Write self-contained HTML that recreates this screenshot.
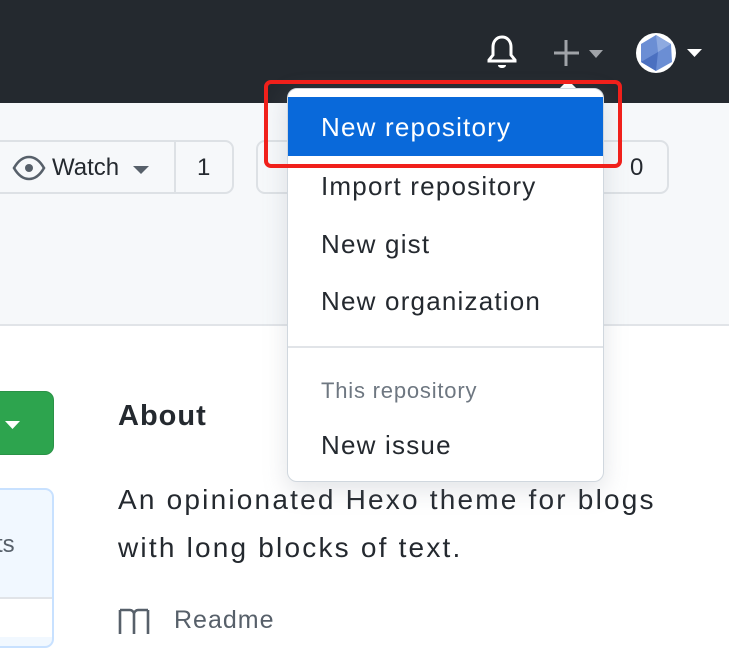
<!DOCTYPE html>
<html><head><meta charset="utf-8"><style>
*{margin:0;padding:0;box-sizing:border-box}
body{width:729px;height:632px;overflow:hidden;position:relative;background:#fff;font-family:"Liberation Sans",sans-serif;color:#24292f}
.hdr{position:absolute;left:0;top:0;width:729px;height:103px;background:#24292f}
.sub{position:absolute;left:0;top:103px;width:729px;height:223px;background:#f6f8fa;border-bottom:2px solid #e1e4e8}
.btn{position:absolute;top:140px;height:54px;border:2px solid #dde1e5;border-radius:9px;background:#f6f8fa}
.abs{position:absolute}
.menu{position:absolute;left:287px;top:88px;width:317px;height:394px;background:#fff;border:1px solid #d0d7de;border-radius:10px;box-shadow:0 8px 24px rgba(140,149,159,.25)}
.mi{position:absolute;left:33px;font-size:26px;letter-spacing:1.2px;color:#24292f;white-space:nowrap}
</style></head><body>
<div class="hdr"></div>
<svg class="abs" style="left:486px;top:34px" width="32" height="36" viewBox="0 0 32 36"><path d="M16 3c-6 0-9 5-9 10v8l-4 5v1h26v-1l-4-5v-8c0-5-3-10-9-10z" fill="none" stroke="#fff" stroke-width="3"/><path d="M12 31h8c0 2-2 3-4 3s-4-1-4-3z" fill="#fff"/></svg>
<svg class="abs" style="left:552px;top:38px" width="56" height="30"><path d="M14 2v26M2 15h25" stroke="#a0a3a8" stroke-width="3"/><path d="M37 12h14l-7 8z" fill="#a0a3a8"/></svg>
<svg class="abs" style="left:636px;top:32px" width="68" height="44"><circle cx="20" cy="21" r="20" fill="#fff"/><polygon points="20,3 35,12 36,30 20,39 5,30 5,12" fill="#6b8ed4"/><polygon points="20,3 35,12 22,20" fill="#8eaae0"/><polygon points="5,30 22,20 20,39" fill="#4b70c0"/><path d="M51 17h15l-7.5 8z" fill="#fff"/></svg>
<div class="sub"></div>
<div class="btn" style="left:-10px;width:244px"></div>
<div class="abs" style="left:174px;top:142px;width:2px;height:50px;background:#dde1e5"></div>
<svg class="abs" style="left:12px;top:153px" width="34" height="30"><path d="M2 15c4-7 9-11 15-11s11 4 15 11c-4 7-9 11-15 11S6 22 2 15z" fill="none" stroke="#57606a" stroke-width="2.6"/><circle cx="17" cy="15" r="4" fill="#57606a"/></svg>
<div class="abs" style="left:52px;top:154px;font-size:24px">Watch</div>
<svg class="abs" style="left:131px;top:165px" width="20" height="10"><path d="M2 1h16l-8 8z" fill="#57606a"/></svg>
<div class="abs" style="left:197px;top:154px;font-size:24px">1</div>
<div class="btn" style="left:256px;width:413px"></div>
<div class="abs" style="left:630px;top:154px;font-size:24px">0</div>
<div class="abs" style="left:-10px;top:391px;width:64px;height:64px;background:#2da44e;border-radius:9px;border:1px solid #2a9247"></div>
<svg class="abs" style="left:4px;top:420px" width="18" height="12"><path d="M1 1h15l-7.5 8z" fill="#fff"/></svg>
<div class="abs" style="left:-10px;top:488px;width:64px;height:160px;background:#f1f8ff;border:2px solid #c8e1ff;border-radius:9px"></div>
<div class="abs" style="left:-8px;top:597px;width:60px;height:40px;background:#fff;border-top:2px solid #e1e4e8"></div>
<div class="abs" style="left:-4px;top:531px;font-size:24px;color:#57606a">ts</div>
<div class="abs" style="left:118px;top:400px;font-size:29px;font-weight:bold;letter-spacing:1px">About</div>
<div class="abs" style="left:118px;top:476px;font-size:28px;letter-spacing:2.2px;line-height:48px;width:620px;white-space:nowrap">An opinionated Hexo theme for blogs<br>with long blocks of text.</div>
<svg class="abs" style="left:118px;top:608px" width="32" height="26"><path d="M2 2h10c2 0 4 2 4 4v20M30 2H20c-2 0-4 2-4 4M2 2v24M30 2v24" fill="none" stroke="#57606a" stroke-width="2.6"/></svg>
<div class="abs" style="left:174px;top:606px;font-size:25px;letter-spacing:1px;color:#57606a">Readme</div>
<svg class="abs" style="left:556px;top:78px" width="24" height="12"><path d="M2 12L12 2l10 10z" fill="#fff"/></svg>
<div class="menu">
<div class="abs" style="left:0;top:8px;width:315px;height:59px;background:#0969da"></div>
<div class="mi" style="top:23px;color:#fff">New repository</div>
<div class="mi" style="top:82px">Import repository</div>
<div class="mi" style="top:140px">New gist</div>
<div class="mi" style="top:197px">New organization</div>
<div class="abs" style="left:0;top:257px;width:315px;height:2px;background:#e1e4e8"></div>
<div class="mi" style="top:289px;font-size:22px;letter-spacing:.8px;color:#6e7781">This repository</div>
<div class="mi" style="top:341px">New issue</div>
</div>
<div class="abs" style="left:264px;top:80px;width:358px;height:88px;border:4px solid #f0201b;border-radius:7px"></div>
</body></html>
